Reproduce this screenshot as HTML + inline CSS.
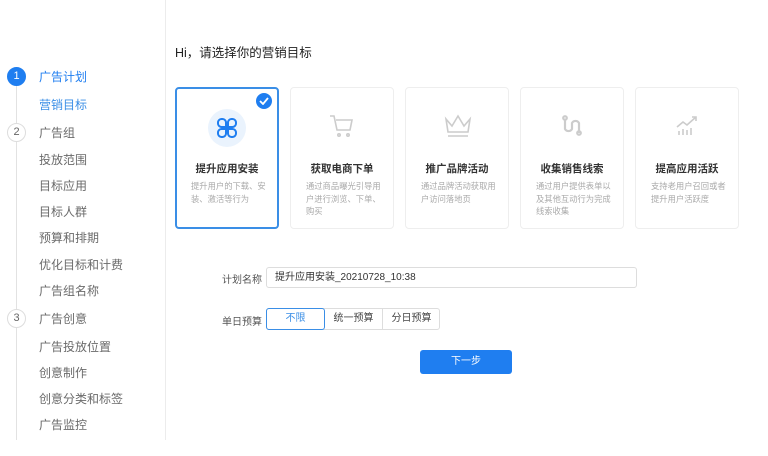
<!DOCTYPE html>
<html><head><meta charset="utf-8"><style>
*{margin:0;padding:0;box-sizing:border-box}
body{width:768px;height:456px;background:#fff;font-family:"Liberation Sans","Noto Sans CJK SC",sans-serif;position:relative;overflow:hidden;color:#333}
.sb{position:absolute;left:0;top:0;width:166px;height:440px;border-right:1px solid #ececec}
.it{position:absolute;left:39px;font-size:12px;color:#6a6a6a;line-height:14px}
.c{position:absolute;left:7px;width:19px;height:19px;border-radius:50%;border:1px solid #ddd;font-size:11px;color:#666;text-align:center;line-height:17px;background:#fff}
.ln{position:absolute;left:16px;width:1px;background:#e2e2e2}
.card{position:absolute;top:87px;width:104px;height:142px;border:1px solid #eee;border-radius:4px;text-align:center}
.card .t{position:absolute;top:73px;left:0;right:0;font-size:10.5px;color:#333;font-weight:bold}
.card .d{position:absolute;top:92px;left:15px;right:9px;text-align:left;font-size:8.3px;line-height:12.5px;color:#aaa;word-break:break-all;line-break:anywhere}
.card svg{position:absolute;left:38px;top:26px}
.lbl{position:absolute;font-size:10px;color:#555}
</style></head><body>
<div class="sb">
<div class="ln" style="top:86px;height:38px"></div>
<div class="ln" style="top:142px;height:168px"></div>
<div class="ln" style="top:328px;height:112px"></div>
<div class="c" style="top:67px;background:#1f7ef0;border-color:#1f7ef0;color:#fff">1</div>
<div class="c" style="top:123px">2</div>
<div class="c" style="top:309px">3</div>
<div class="it" style="top:70px;color:#1f7ef0">广告计划</div>
<div class="it" style="top:98px;color:#3a8ee6">营销目标</div>
<div class="it" style="top:126px">广告组</div>
<div class="it" style="top:153px">投放范围</div>
<div class="it" style="top:179px">目标应用</div>
<div class="it" style="top:205px">目标人群</div>
<div class="it" style="top:231px">预算和排期</div>
<div class="it" style="top:258px">优化目标和计费</div>
<div class="it" style="top:284px">广告组名称</div>
<div class="it" style="top:312px">广告创意</div>
<div class="it" style="top:340px">广告投放位置</div>
<div class="it" style="top:366px">创意制作</div>
<div class="it" style="top:392px">创意分类和标签</div>
<div class="it" style="top:418px">广告监控</div>
</div>
<div style="position:absolute;left:175px;top:42px;font-size:12.5px;color:#222">Hi，请选择你的营销目标</div>

<div class="card" style="left:175px;border:2px solid #3a8ee6">
<div style="position:absolute;left:31px;top:20px;width:38px;height:38px;border-radius:50%;background:#eaf3fd"></div>
<svg style="left:39px;top:28px" width="22" height="22" viewBox="0 0 22 22" fill="none" stroke="#1f7ef0" stroke-width="2"><path d="M10 10H5.5A3.5 3.5 0 0 1 2 6.5V5.5A3.5 3.5 0 0 1 5.5 2h1A3.5 3.5 0 0 1 10 5.5z"/><path d="M12 10h4.5A3.5 3.5 0 0 0 20 6.5V5.5A3.5 3.5 0 0 0 16.5 2h-1A3.5 3.5 0 0 0 12 5.5z"/><path d="M10 12H5.5A3.5 3.5 0 0 0 2 15.5v1A3.5 3.5 0 0 0 5.5 20h1A3.5 3.5 0 0 0 10 16.5z"/><path d="M12 12h4.5a3.5 3.5 0 0 1 3.5 3.5v1a3.5 3.5 0 0 1-3.5 3.5h-1a3.5 3.5 0 0 1-3.5-3.5z"/></svg>
<div style="position:absolute;right:5px;top:4px;width:16px;height:16px;border-radius:50%;background:#1f7ef0"><svg style="left:3px;top:4px" width="10" height="8" viewBox="0 0 10 8" fill="none" stroke="#fff" stroke-width="1.8"><path d="M1 4l3 3 5-6"/></svg></div>
<div class="t" style="top:72px">提升应用安装</div>
<div class="d" style="top:91px;left:14px">提升用户的下载、安装、激活等行为</div>
</div>
<div class="card" style="left:290px">
<svg width="26" height="24" viewBox="0 0 26 24" fill="none" stroke="#ccc" stroke-width="1.6"><path d="M1 2h4l3 14h13l2-10H7"/><circle cx="10" cy="21" r="1.2"/><circle cx="19" cy="21" r="1.2"/></svg>
<div class="t">获取电商下单</div><div class="d">通过商品曝光引导用户进行浏览、下单、购买</div></div>
<div class="card" style="left:405px">
<svg width="28" height="24" viewBox="0 0 28 24" fill="none" stroke="#ccc" stroke-width="1.6"><path d="M2 5l6 7 6-10 6 10 6-7-2 13H4zM4 22h20"/></svg>
<div class="t">推广品牌活动</div><div class="d">通过品牌活动获取用户访问落地页</div></div>
<div class="card" style="left:520px">
<svg width="26" height="24" viewBox="0 0 26 24" fill="none" stroke="#ccc" stroke-width="2.2"><path d="M6 5v10a4 4 0 0 0 7 0V9a4 4 0 0 1 7 0v10"/><circle cx="6" cy="4" r="1.8"/><circle cx="20" cy="19" r="1.8"/></svg>
<div class="t">收集销售线索</div><div class="d">通过用户提供表单以及其他互动行为完成线索收集</div></div>
<div class="card" style="left:635px">
<svg width="26" height="24" viewBox="0 0 26 24" fill="none" stroke="#ccc" stroke-width="1.6"><path d="M3 13l6-5 4 3 9-8M18 3h4v4M5 21v-4M9 21v-6M13 21v-5M17 21v-7"/></svg>
<div class="t">提高应用活跃</div><div class="d">支持老用户召回或者提升用户活跃度</div></div>

<div class="lbl" style="left:222px;top:271px">计划名称</div>
<div style="position:absolute;left:266px;top:267px;width:371px;height:21px;border:1px solid #ddd;border-radius:3px;font-size:10px;padding-left:8px;line-height:19px;color:#333">提升应用安装_20210728_10:38</div>
<div class="lbl" style="left:222px;top:313px">单日预算</div>
<div style="position:absolute;left:266px;top:308px;width:174px;height:22px;border:1px solid #ddd;border-radius:3px;font-size:10px;color:#444">
<div style="position:absolute;left:-1px;top:-1px;width:59px;height:22px;border:1px solid #3a8ee6;border-radius:3px;color:#3a8ee6;text-align:center;line-height:20px">不限</div>
<div style="position:absolute;left:58px;top:0;width:57px;height:20px;text-align:center;line-height:20px">统一预算</div>
<div style="position:absolute;left:115px;top:0;width:58px;height:20px;border-left:1px solid #ddd;text-align:center;line-height:20px">分日预算</div>
</div>
<div style="position:absolute;left:420px;top:350px;width:92px;height:24px;background:#1f7ef0;border-radius:3px;color:#fff;font-size:10px;text-align:center;line-height:24px">下一步</div>
</body></html>
